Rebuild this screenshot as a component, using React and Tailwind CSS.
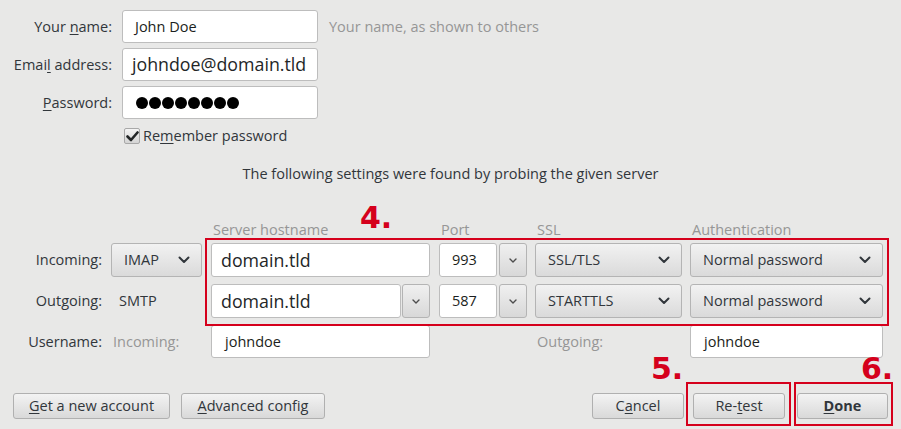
import React from 'react';

const RED = 'border-[#d5001c]';

function U({ children }) {
  return <span className="underline underline-offset-2">{children}</span>;
}

function Chevron({ small }) {
  if (small) {
    return (
      <svg width="8" height="5" viewBox="0 0 8 5" className="block">
        <path d="M1 1l3 3 3-3" fill="none" stroke="#4d4d4d" strokeWidth="1.4" strokeLinecap="round" strokeLinejoin="round" />
      </svg>
    );
  }
  return (
    <svg width="12" height="8" viewBox="0 0 12 8" className="block">
      <path d="M1.5 1.5l4.5 4.5 4.5-4.5" fill="none" stroke="#31363b" strokeWidth="2" strokeLinecap="round" strokeLinejoin="round" />
    </svg>
  );
}

function Select({ value, width }) {
  return (
    <div className={`${width} h-[34px] flex items-center justify-between pl-[12px] pr-[11px] rounded-[3px] border border-[#b4b4b4] bg-gradient-to-b from-[#f2f2f2] to-[#dadada] text-[#31363b] text-[14.5px]`}>
      <span>{value}</span>
      <Chevron />
    </div>
  );
}

function DropBtn() {
  return (
    <div className="w-[28px] h-[34px] flex items-center justify-center rounded-[3px] border border-[#b4b4b4] bg-gradient-to-b from-[#f0f0f0] to-[#d8d8d8]">
      <Chevron small />
    </div>
  );
}

function Field({ value, width, big, height = 'h-[34px]', pl = 'pl-[12px]' }) {
  return (
    <div className={`${width} ${height} ${pl} flex items-center bg-white rounded-[3px] border border-[#bdbdbd] ${big ? 'text-[17.8px] text-[#232627]' : 'text-[14.5px] text-[#1b1e20]'}`}>
      {value}
    </div>
  );
}

function Button({ children, width, bold }) {
  return (
    <div className={`${width} h-[26px] flex items-center justify-center rounded-[3px] border border-[#b0b0b0] bg-gradient-to-b from-[#f3f3f3] to-[#d9d9d9] text-[14.5px] text-[#31363b] ${bold ? 'font-bold' : ''}`}>
      {children}
    </div>
  );
}

export default function App() {
  return (
    <div className="relative w-[901px] h-[429px] overflow-hidden bg-[#e8e8e7] font-['Open_Sans',sans-serif] text-[14.5px] text-[#31363b]">
      {/* account */}
      <div className="pt-[10px] flex flex-col gap-[5px]">
        <div className="flex items-center h-[33px]">
          <div className="w-[112px] text-right">Your <U>n</U>ame:</div>
          <div className="ml-[10px]"><Field width="w-[196px]" height="h-[33px]" value="John Doe" /></div>
          <div className="ml-[11px] text-[#969696]">Your name, as shown to others</div>
        </div>
        <div className="flex items-center h-[33px]">
          <div className="w-[112px] text-right">Emai<U>l</U> address:</div>
          <div className="ml-[10px]"><Field width="w-[196px]" height="h-[33px]" pl="pl-[9px]" big value="johndoe@domain.tld" /></div>
        </div>
        <div className="flex items-center h-[33px]">
          <div className="w-[112px] text-right"><U>P</U>assword:</div>
          <div className="ml-[10px]">
            <div className="w-[196px] h-[33px] pl-[13px] flex items-center gap-[1px] bg-white rounded-[3px] border border-[#bdbdbd]">
              {[0, 1, 2, 3, 4, 5, 6, 7].map((i) => (
                <span key={i} className="w-[12px] h-[12px] rounded-full bg-black" />
              ))}
            </div>
          </div>
        </div>
      </div>
      <div className="mt-[9px] pl-[124px] flex items-center h-[16px]">
        <div className="w-[16px] h-[16px] rounded-[2px] border border-[#a8a8a8] bg-gradient-to-b from-[#f4f4f4] to-[#d4d4d4] flex items-center justify-center">
          <svg width="13" height="11" viewBox="0 0 13 11">
            <path d="M1.5 5.5l3.5 3.5 6.5-7.5" fill="none" stroke="#232627" strokeWidth="2.6" strokeLinecap="round" strokeLinejoin="round" />
          </svg>
        </div>
        <span className="ml-[3px]">Re<U>m</U>ember password</span>
      </div>

      <div className="mt-[20px] h-[20px] leading-[20px] text-center">
        The following settings were found by probing the given server
      </div>

      {/* server table */}
      <div className="mt-[36px] flex h-[20px] leading-[20px] text-[#969696]">
        <div className="ml-[211px] w-[219px] pl-[2px]">Server hostname</div>
        <div className="ml-[9px] w-[88px] pl-[2px]">Port</div>
        <div className="ml-[8px] w-[147px] pl-[2px]">SSL</div>
        <div className="ml-[8px] w-[193px] pl-[2px]">Authentication</div>
      </div>

      <div className="mt-[3px] flex items-center h-[34px]">
        <div className="w-[102px] text-right">Incoming:</div>
        <div className="ml-[9px]"><Select width="w-[91px]" value="IMAP" /></div>
        <div className="ml-[9px]"><Field width="w-[219px]" pl="pl-[9px]" big value="domain.tld" /></div>
        <div className="ml-[9px] flex gap-[2px]">
          <Field width="w-[58px]" value="993" />
          <DropBtn />
        </div>
        <div className="ml-[8px]"><Select width="w-[147px]" value="SSL/TLS" /></div>
        <div className="ml-[8px]"><Select width="w-[193px]" value="Normal password" /></div>
      </div>

      <div className="mt-[7px] flex items-center h-[34px]">
        <div className="w-[102px] text-right">Outgoing:</div>
        <div className="ml-[9px] w-[91px] pl-[8px]">SMTP</div>
        <div className="ml-[9px] flex gap-[1px]">
          <Field width="w-[190px]" pl="pl-[9px]" big value="domain.tld" />
          <DropBtn />
        </div>
        <div className="ml-[9px] flex gap-[2px]">
          <Field width="w-[58px]" value="587" />
          <DropBtn />
        </div>
        <div className="ml-[8px]"><Select width="w-[147px]" value="STARTTLS" /></div>
        <div className="ml-[8px]"><Select width="w-[193px]" value="Normal password" /></div>
      </div>

      <div className="mt-[7px] flex items-center h-[33px]">
        <div className="w-[102px] text-right">Username:</div>
        <div className="ml-[9px] w-[91px] pl-[2px] text-[#969696]">Incoming:</div>
        <div className="ml-[9px]"><Field width="w-[219px]" height="h-[33px]" pl="pl-[13px]" value="johndoe" /></div>
        <div className="ml-[105px] w-[147px] pl-[2px] text-[#969696]">Outgoing:</div>
        <div className="ml-[8px]"><Field width="w-[193px]" height="h-[33px]" pl="pl-[13px]" value="johndoe" /></div>
      </div>

      {/* buttons */}
      <div className="mt-[35px] px-[13px] flex justify-between">
        <div className="flex gap-[11px]">
          <Button width="w-[157px]"><U>G</U>et a new account</Button>
          <Button width="w-[144px]"><U>A</U>dvanced config</Button>
        </div>
        <div className="flex gap-[9px]">
          <Button width="w-[92px]">C<U>a</U>ncel</Button>
          <Button width="w-[92px]">Re-<U>t</U>est</Button>
          <div className="ml-[3px]"><Button width="w-[91px]" bold><U>D</U>one</Button></div>
        </div>
      </div>

      {/* annotations */}
      <div className={`absolute left-[205px] top-[238px] w-[684px] h-[88px] border-2 ${RED}`} />
      <div className={`absolute left-[686px] top-[382px] w-[105px] h-[44px] border-2 ${RED}`} />
      <div className={`absolute left-[794px] top-[382px] w-[99px] h-[44px] border-2 ${RED}`} />
      <div className="absolute left-[360px] top-[200px] font-['DejaVu_Sans',sans-serif] font-bold text-[30px] leading-[36px] text-[#d5001c]">4.</div>
      <div className="absolute left-[651px] top-[351px] font-['DejaVu_Sans',sans-serif] font-bold text-[30px] leading-[36px] text-[#d5001c]">5.</div>
      <div className="absolute left-[861px] top-[351px] font-['DejaVu_Sans',sans-serif] font-bold text-[30px] leading-[36px] text-[#d5001c]">6.</div>
    </div>
  );
}
